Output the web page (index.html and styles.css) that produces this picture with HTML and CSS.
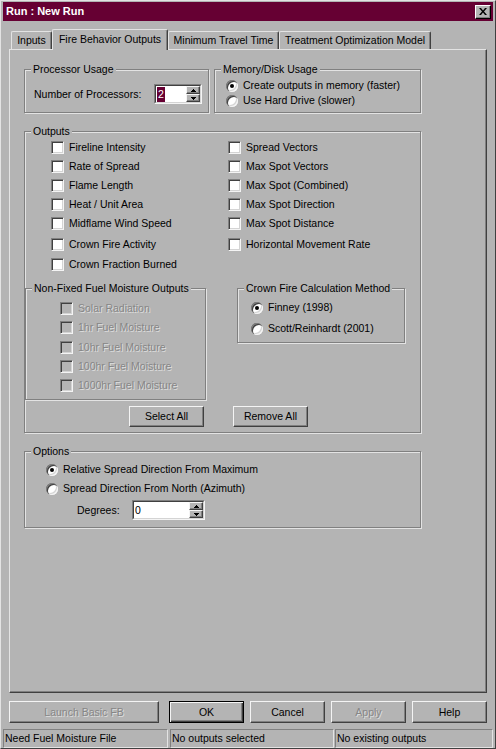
FILE: index.html
```html
<!DOCTYPE html>
<html>
<head>
<meta charset="utf-8">
<link rel="stylesheet" href="styles.css">
</head>
<body>
<div class="window">
  <div class="titlebar">
    <span class="title">Run : New Run</span>
    <span class="close"><svg width="8" height="7" viewBox="0 0 8 7"><path d="M0 0h2l2 2.5 2-2.5h2l-3 3.5 3 3.5h-2l-2-2.5-2 2.5h-2l3-3.5z"/></svg></span>
  </div>
  <div class="dialog">
    <div class="tabs">
      <div class="tab w-inputs">Inputs</div>
      <div class="tab active w-fbo">Fire Behavior Outputs</div>
      <div class="tab w-mtt">Minimum Travel Time</div>
      <div class="tab w-tom">Treatment Optimization Model</div>
    </div>
    <div class="panel">
      <div class="top-row">
        <fieldset class="group g-proc">
          <legend>Processor Usage</legend>
          <div class="gb gb-proc">
            <div class="proc-row">
              <span class="proc-label">Number of Processors:</span>
              <div class="spin s-proc">
                <div class="spin-in">
                  <span class="spin-val"><span class="sel">2</span></span>
                  <span class="spin-btns">
                    <span class="spin-btn"><svg width="5" height="3" viewBox="0 0 5 3"><path d="M2 0h1v1h1v1h1v1H0V2h1V1h1z"/></svg></span>
                    <span class="spin-btn"><svg width="5" height="3" viewBox="0 0 5 3"><path d="M0 0h5v1H4v1H3v1H2V2H1V1H0z"/></svg></span>
                  </span>
                </div>
              </div>
            </div>
          </div>
        </fieldset>
        <fieldset class="group g-mem">
          <legend>Memory/Disk Usage</legend>
          <div class="gb gb-mem">
            <div class="rb-row"><span class="radio on"></span>Create outputs in memory (faster)</div>
            <div class="rb-row"><span class="radio"></span>Use Hard Drive (slower)</div>
          </div>
        </fieldset>
      </div>

      <fieldset class="group g-out">
        <legend>Outputs</legend>
        <div class="gb gb-out">
          <div class="cols">
            <div class="col-l">
              <div class="ck-row"><span class="cb"></span>Fireline Intensity</div>
              <div class="ck-row"><span class="cb"></span>Rate of Spread</div>
              <div class="ck-row"><span class="cb"></span>Flame Length</div>
              <div class="ck-row"><span class="cb"></span>Heat / Unit Area</div>
              <div class="ck-row h21"><span class="cb"></span>Midflame Wind Speed</div>
              <div class="ck-row h20"><span class="cb"></span>Crown Fire Activity</div>
              <div class="ck-row"><span class="cb"></span>Crown Fraction Burned</div>
            </div>
            <div class="col-r">
              <div class="ck-row"><span class="cb"></span>Spread Vectors</div>
              <div class="ck-row"><span class="cb"></span>Max Spot Vectors</div>
              <div class="ck-row"><span class="cb"></span>Max Spot (Combined)</div>
              <div class="ck-row"><span class="cb"></span>Max Spot Direction</div>
              <div class="ck-row h21"><span class="cb"></span>Max Spot Distance</div>
              <div class="ck-row h20"><span class="cb"></span>Horizontal Movement Rate</div>
            </div>
          </div>
          <div class="sub-row">
            <fieldset class="group g-nf">
              <legend>Non-Fixed Fuel Moisture Outputs</legend>
              <div class="gb gb-nf">
                <div class="ck-row dis"><span class="cb off"></span>Solar Radiation</div>
                <div class="ck-row h20 dis"><span class="cb off"></span>1hr Fuel Moisture</div>
                <div class="ck-row dis"><span class="cb off"></span>10hr Fuel Moisture</div>
                <div class="ck-row dis"><span class="cb off"></span>100hr Fuel Moisture</div>
                <div class="ck-row dis"><span class="cb off"></span>1000hr Fuel Moisture</div>
              </div>
            </fieldset>
            <fieldset class="group g-cr">
              <legend>Crown Fire Calculation Method</legend>
              <div class="gb gb-cr">
                <div class="rb-row r21"><span class="radio on"></span>Finney (1998)</div>
                <div class="rb-row r21"><span class="radio"></span>Scott/Reinhardt (2001)</div>
              </div>
            </fieldset>
          </div>
          <div class="btn-row">
            <span class="btn">Select All</span>
            <span class="btn">Remove All</span>
          </div>
        </div>
      </fieldset>

      <fieldset class="group g-opt">
        <legend>Options</legend>
        <div class="gb gb-opt">
          <div class="rb-row r19"><span class="radio on"></span>Relative Spread Direction From Maximum</div>
          <div class="rb-row r19"><span class="radio"></span>Spread Direction From North (Azimuth)</div>
          <div class="deg-row">
            <span class="deg-label">Degrees:</span>
            <div class="spin s-deg">
              <div class="spin-in">
                <span class="spin-val">0</span>
                <span class="spin-btns">
                  <span class="spin-btn"><svg width="5" height="3" viewBox="0 0 5 3"><path d="M2 0h1v1h1v1h1v1H0V2h1V1h1z"/></svg></span>
                  <span class="spin-btn"><svg width="5" height="3" viewBox="0 0 5 3"><path d="M0 0h5v1H4v1H3v1H2V2H1V1H0z"/></svg></span>
                </span>
              </div>
            </div>
          </div>
        </div>
      </fieldset>
    </div>

    <div class="actions">
      <span class="btn big b-launch dis">Launch Basic FB</span>
      <span class="btn big b-ok">OK</span>
      <span class="btn big b-gap">Cancel</span>
      <span class="btn big b-gap dis">Apply</span>
      <span class="btn big b-gap">Help</span>
    </div>
  </div>
  <div class="status">
    <span class="sp sp1">Need Fuel Moisture File</span>
    <span class="sp sp2">No outputs selected</span>
    <span class="sp sp3">No existing outputs</span>
  </div>
</div>
</body>
</html>
```

FILE: styles.css
```css
* { box-sizing: border-box; }
html, body { margin: 0; padding: 0; }
body {
  background: #b4b4b4;
  font-family: "Liberation Sans", Arial, sans-serif;
  font-size: 10.5px;
  line-height: 13px;
  color: #000;
}
.window {
  width: 496px;
  height: 749px;
  border: 1px solid;
  border-color: #e3e3e3 #404040 #404040 #e3e3e3;
  padding: 1px 2px 0;
  display: flex;
  flex-direction: column;
}
.titlebar {
  flex: none;
  height: 19px;
  background: #660033;
  display: flex;
  align-items: center;
  justify-content: space-between;
  padding: 0 2px 0 3px;
}
.title { color: #fff; font-weight: bold; font-size: 11px; }
.close {
  width: 16px;
  height: 14px;
  background: #b4b4b4;
  border: 1px solid;
  border-color: #fff #000 #000 #fff;
  box-shadow: inset -1px -1px 0 #808080;
  display: flex;
  align-items: center;
  justify-content: center;
}
.close svg { display: block; }

.dialog { flex: none; padding: 0 6px; margin-top: 8px; }
.tabs { display: flex; align-items: flex-end; height: 20px; padding-left: 2px; }
.tab {
  height: 18px;
  border: 1px solid;
  border-bottom: 0;
  border-color: #e3e3e3 #404040 #e3e3e3 #e3e3e3;
  box-shadow: inset -1px 0 0 #808080;
  border-radius: 2px 2px 0 0;
  display: flex;
  align-items: center;
  justify-content: center;
  white-space: nowrap;
}
.tab.active {
  height: 21px;
  margin-bottom: -1px;
  padding-bottom: 2px;
  position: relative;
  z-index: 1;
  background: #b4b4b4;
}
.w-inputs { width: 41px; }
.w-fbo { width: 116px; }
.w-mtt { width: 111px; }
.w-tom { width: 152px; }

.panel {
  height: 644px;
  border: 1px solid;
  border-color: #e3e3e3 #404040 #404040 #e3e3e3;
  box-shadow: inset -1px -1px 0 #808080;
  padding: 13px 0 0 14px;
}

.group {
  margin: 0;
  padding: 0;
  min-width: 0;
  border: 1px solid #808080;
  box-shadow: inset 1px 1px 0 #e3e3e3, 1px 1px 0 #e3e3e3;
}
.group legend {
  margin-left: 6px;
  padding: 0 2px;
  line-height: 13px;
  white-space: nowrap;
  background: #b4b4b4;
}

.top-row { display: flex; gap: 5px; }
.g-proc { width: 185px; }
.gb-proc { padding: 8px 0 8px 9px; }
.proc-row { display: flex; align-items: center; height: 20px; }
.proc-label { width: 120px; }
.s-proc { width: 48px; }
.g-mem { width: 207px; }
.gb-mem { padding: 2px 0 4px 11px; }

.rb-row { display: flex; align-items: center; height: 15px; white-space: nowrap; }
.rb-row.r21 { height: 21px; }
.rb-row.r19 { height: 19px; }
.radio {
  flex: none;
  position: relative;
  width: 12px;
  height: 12px;
  margin-right: 5px;
  border-radius: 50%;
  background: #fff;
  box-shadow: inset 1px 1px 0 #808080, inset 2px 2px 0 #404040, inset -1px -1px 0 #f4f4f4, inset -2px -2px 0 #d4d4d4;
}
.radio.on::after {
  content: "";
  position: absolute;
  left: 4px;
  top: 4px;
  width: 4px;
  height: 4px;
  border-radius: 50%;
  background: #000;
}

.cb {
  flex: none;
  width: 13px;
  height: 13px;
  margin-right: 5px;
  background: #fff;
  border: 1px solid;
  border-color: #808080 #f4f4f4 #f4f4f4 #808080;
  box-shadow: inset 1px 1px 0 #404040, inset -1px -1px 0 #d4d4d4;
}
.cb.off { background: #b4b4b4; }
.ck-row { display: flex; align-items: flex-start; padding-top: 3px; height: 19px; white-space: nowrap; }
.ck-row.h20 { height: 20px; }
.ck-row.h21 { height: 21px; }
.dis { color: #868686; text-shadow: 1px 1px 0 #dedede; }

.g-out { width: 397px; margin-top: 12px; }
.gb-out { padding: 0 0 5px 0; }
.cols { display: flex; }
.col-l { width: 203px; padding-left: 26px; }
.sub-row { display: flex; align-items: flex-start; margin-top: 8px; }
.g-nf { width: 181px; }
.gb-nf { padding: 4px 0 4px 34px; }
.g-cr { width: 168px; margin-left: 31px; }
.gb-cr { padding: 2px 0 3px 13px; }

.btn-row { display: flex; gap: 29px; margin-top: 6px; padding-left: 104px; }
.btn {
  width: 75px;
  height: 21px;
  border: 1px solid;
  border-color: #f4f4f4 #404040 #404040 #f4f4f4;
  box-shadow: inset -1px -1px 0 #808080;
  display: flex;
  align-items: center;
  justify-content: center;
  white-space: nowrap;
}

.g-opt { width: 397px; margin-top: 12px; }
.gb-opt { padding: 2px 0 7px 21px; }
.deg-row { display: flex; align-items: center; margin-top: 2px; padding-left: 31px; }
.deg-label { width: 55px; }
.s-deg { width: 73px; }

.spin {
  flex: none;
  height: 20px;
  border: 1px solid;
  border-color: #808080 #f4f4f4 #f4f4f4 #808080;
}
.spin-in {
  height: 100%;
  display: flex;
  background: #fff;
  border: 1px solid;
  border-color: #404040 #d4d4d4 #d4d4d4 #404040;
}
.spin-val { flex: 1; display: flex; align-items: center; padding-left: 1px; }
.sel { background: #660033; color: #fff; padding: 0 1px; line-height: 15px; }
.spin-btns { width: 14px; display: flex; flex-direction: column; }
.spin-btn {
  flex: 1;
  background: #b4b4b4;
  border: 1px solid;
  border-color: #f4f4f4 #404040 #404040 #f4f4f4;
  box-shadow: inset -1px -1px 0 #808080;
  display: flex;
  align-items: center;
  justify-content: center;
}
.spin-btn svg { display: block; }

.actions { display: flex; margin-top: 8px; height: 22px; }
.btn.big { height: 22px; }
.b-launch { width: 150px; }
.b-ok {
  margin-left: 10px;
  border-color: #000;
  box-shadow: inset 1px 1px 0 #f4f4f4, inset -1px -1px 0 #404040, inset -2px -2px 0 #808080;
}
.b-gap { margin-left: 6px; }

.status { flex: none; display: flex; margin-top: 6px; height: 19px; }
.sp {
  border: 1px solid;
  border-color: #808080 #e3e3e3 #e3e3e3 #808080;
  padding-left: 1px;
  line-height: 17px;
  white-space: nowrap;
  overflow: hidden;
}
.sp1 { width: 165px; }
.sp2 { width: 164px; margin-left: 2px; }
.sp3 { width: 158px; margin-left: 1px; }
```
